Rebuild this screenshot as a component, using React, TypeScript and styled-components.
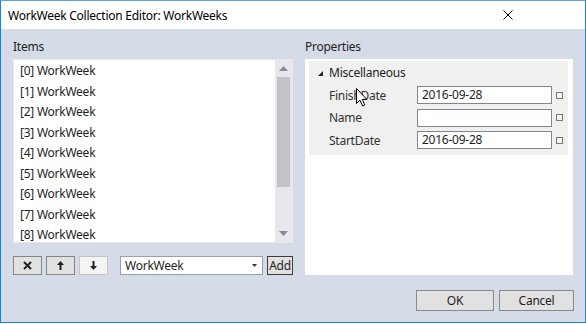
import React from 'react';
import styled, { createGlobalStyle } from 'styled-components';

const GlobalStyle = createGlobalStyle`
  html, body { margin: 0; padding: 0; background: #ffffff; }
  body {
    font-family: "Noto Sans", "Liberation Sans", sans-serif;
    font-size: 12px;
    letter-spacing: -0.25px;
    color: #000;
  }
  * { box-sizing: border-box; }
`;

const items = Array.from({ length: 9 }, (_, i) => `[${i}] WorkWeek`);

const props = [
  { name: 'FinishDate', value: '2016-09-28' },
  { name: 'Name', value: '' },
  { name: 'StartDate', value: '2016-09-28' },
];

const App = () => {
  return (
    <>
      <GlobalStyle />
      <Window>
        <TitleBar>
          <Title>WorkWeek Collection Editor: WorkWeeks</Title>
          <CloseIcon width="10" height="10" viewBox="0 0 10 10">
            <path d="M0.5 0.5 L9.5 9.5 M9.5 0.5 L0.5 9.5" stroke="#000" strokeWidth="1" />
          </CloseIcon>
        </TitleBar>
        <Client>
          <Columns>
            <Column>
              <SectionLabel>Items</SectionLabel>
              <ListBox>
                <ListItems>
                  {items.map((t) => (
                    <ListRow key={t}>{t}</ListRow>
                  ))}
                </ListItems>
                <ScrollBar>
                  <ScrollArrow>
                    <svg width="9" height="5" viewBox="0 0 9 5">
                      <polygon points="4.5,0 9,5 0,5" fill="#868999" />
                    </svg>
                  </ScrollArrow>
                  <ScrollThumb />
                  <ScrollTrack />
                  <ScrollArrow>
                    <svg width="9" height="5" viewBox="0 0 9 5">
                      <polygon points="0,0 9,0 4.5,5" fill="#868999" />
                    </svg>
                  </ScrollArrow>
                </ScrollBar>
              </ListBox>
              <Toolbar>
                <ToolButton>
                  <svg width="9" height="9" viewBox="0 0 9 9">
                    <path d="M1 1 L8 8 M8 1 L1 8" stroke="#222" strokeWidth="2" />
                  </svg>
                </ToolButton>
                <ToolButton>
                  <svg width="7" height="9" viewBox="0 0 7 9">
                    <polygon points="3.5,0 7,4 4.5,4 4.5,9 2.5,9 2.5,4 0,4" fill="#222" />
                  </svg>
                </ToolButton>
                <ToolButton disabledLook>
                  <svg width="7" height="9" viewBox="0 0 7 9">
                    <polygon points="2.5,0 4.5,0 4.5,5 7,5 3.5,9 0,5 2.5,5" fill="#222" />
                  </svg>
                </ToolButton>
                <Combo>
                  <span>WorkWeek</span>
                  <svg width="5" height="3" viewBox="0 0 5 3">
                    <polygon points="0,0 5,0 2.5,3" fill="#333" />
                  </svg>
                </Combo>
                <AddButton>Add</AddButton>
              </Toolbar>
            </Column>
            <Column>
              <SectionLabel>Properties</SectionLabel>
              <PropPanel>
                <Category>
                  <CategoryHeader>
                    <svg width="5" height="5" viewBox="0 0 5 5">
                      <polygon points="5,0 5,5 0,5" fill="#222" />
                    </svg>
                    <span>Miscellaneous</span>
                  </CategoryHeader>
                  {props.map((p, i) => (
                    <PropRow key={p.name}>
                      <PropName>{p.name}</PropName>
                      <PropValue>{p.value}</PropValue>
                      <PropBox />
                      {i === 0 && (
                        <Cursor width="13" height="19" viewBox="0 0 13 19">
                          <path
                            d="M0.5 0.5 L0.5 15.5 L4 12.2 L6.6 18 L8.8 17 L6.3 11.4 L10.8 11.4 Z"
                            fill="#fff"
                            stroke="#000"
                            strokeWidth="1"
                          />
                        </Cursor>
                      )}
                    </PropRow>
                  ))}
                </Category>
              </PropPanel>
            </Column>
          </Columns>
          <Footer>
            <DialogButton width={78}>OK</DialogButton>
            <DialogButton width={75}>Cancel</DialogButton>
          </Footer>
        </Client>
      </Window>
    </>
  );
};

const Window = styled.div`
  width: 586px;
  height: 323px;
  border: 1px solid #1a84d8;
  border-top-color: #5aa4e0;
  display: flex;
  flex-direction: column;
  background: #d6dbe8;
`;

const TitleBar = styled.div`
  height: 28px;
  background: #ffffff;
  display: flex;
  align-items: center;
  justify-content: space-between;
  padding: 0 72px 0 7px;
`;

const Title = styled.div`
  font-size: 12px;
  color: #000;
`;

const CloseIcon = styled.svg`
  display: block;
`;

const Client = styled.div`
  flex: 1;
  display: flex;
  flex-direction: column;
  padding: 10px 11px 11px 12px;
`;

const Columns = styled.div`
  display: grid;
  grid-template-columns: 280px 268px;
  column-gap: 12px;
`;

const Column = styled.div`
  display: flex;
  flex-direction: column;
`;

const SectionLabel = styled.div`
  height: 16px;
  line-height: 16px;
  margin-bottom: 4px;
  color: #1e1e1e;
`;

const ListBox = styled.div`
  height: 184px;
  background: #fff;
  border: 1px solid #e6e8ee;
  display: flex;
`;

const ListItems = styled.div`
  flex: 1;
  padding: 1px 0 0 6px;
  overflow: hidden;
`;

const ListRow = styled.div`
  height: 20.5px;
  line-height: 20.5px;
  color: #1e1e1e;
  white-space: nowrap;
`;

const ScrollBar = styled.div`
  width: 17px;
  background: #e8e8ec;
  display: flex;
  flex-direction: column;
`;

const ScrollArrow = styled.div`
  height: 17px;
  display: flex;
  align-items: center;
  justify-content: center;
  svg { display: block; }
`;

const ScrollThumb = styled.div`
  height: 110px;
  margin: 0 2px;
  background: #c2c3c9;
`;

const ScrollTrack = styled.div`
  flex: 1;
`;

const Toolbar = styled.div`
  margin-top: 13px;
  height: 19px;
  display: flex;
  align-items: stretch;
`;

const ToolButton = styled.div<{ disabledLook?: boolean }>`
  width: 29px;
  margin-right: 4px;
  display: flex;
  align-items: center;
  justify-content: center;
  background: ${(p) => (p.disabledLook ? '#f4f4f4' : '#e1e1e1')};
  border: 1px solid ${(p) => (p.disabledLook ? '#c4c4c4' : '#858585')};
  svg { display: block; }
`;

const Combo = styled.div`
  width: 143px;
  margin-left: 8px;
  background: #fff;
  border: 1px solid #9ba0ab;
  display: flex;
  align-items: center;
  justify-content: space-between;
  padding: 0 5px 0 4px;
  color: #1e1e1e;
  svg { display: block; }
`;

const AddButton = styled.div`
  width: 26px;
  margin-left: 4px;
  background: #e1e1e1;
  border: 1px solid #3c3c3c;
  display: flex;
  align-items: center;
  justify-content: center;
  color: #1e1e1e;
`;

const PropPanel = styled.div`
  height: 216px;
  background: #fff;
  padding: 2px 5px 0 4px;
`;

const Category = styled.div`
  background: #f0f0f0;
  padding-bottom: 3.5px;
`;

const CategoryHeader = styled.div`
  height: 23px;
  display: flex;
  align-items: center;
  padding-left: 9px;
  gap: 6px;
  color: #1e1e1e;
  svg { display: block; margin-top: 1px; }
`;

const PropRow = styled.div`
  position: relative;
  height: 22.5px;
  display: grid;
  grid-template-columns: 88px 135px 11px;
  align-items: center;
  padding-left: 20px;
`;

const PropName = styled.div`
  color: #333;
`;

const PropValue = styled.div`
  height: 18px;
  line-height: 16px;
  background: #fff;
  border: 1px solid #7f8591;
  padding-left: 4px;
  color: #1e1e1e;
`;

const PropBox = styled.div`
  width: 7px;
  height: 7px;
  margin-left: 4px;
  border: 1px solid #777;
  background: #f4f4f4;
`;

const Cursor = styled.svg`
  position: absolute;
  left: 47px;
  top: 4px;
  display: block;
`;

const Footer = styled.div`
  margin-top: 15px;
  display: flex;
  justify-content: flex-end;
  gap: 5px;
`;

const DialogButton = styled.div<{ width: number }>`
  width: ${(p) => p.width}px;
  height: 21px;
  background: #e1e1e1;
  border: 1px solid #8a8a8a;
  display: flex;
  align-items: center;
  justify-content: center;
  color: #1e1e1e;
`;

export default App;
